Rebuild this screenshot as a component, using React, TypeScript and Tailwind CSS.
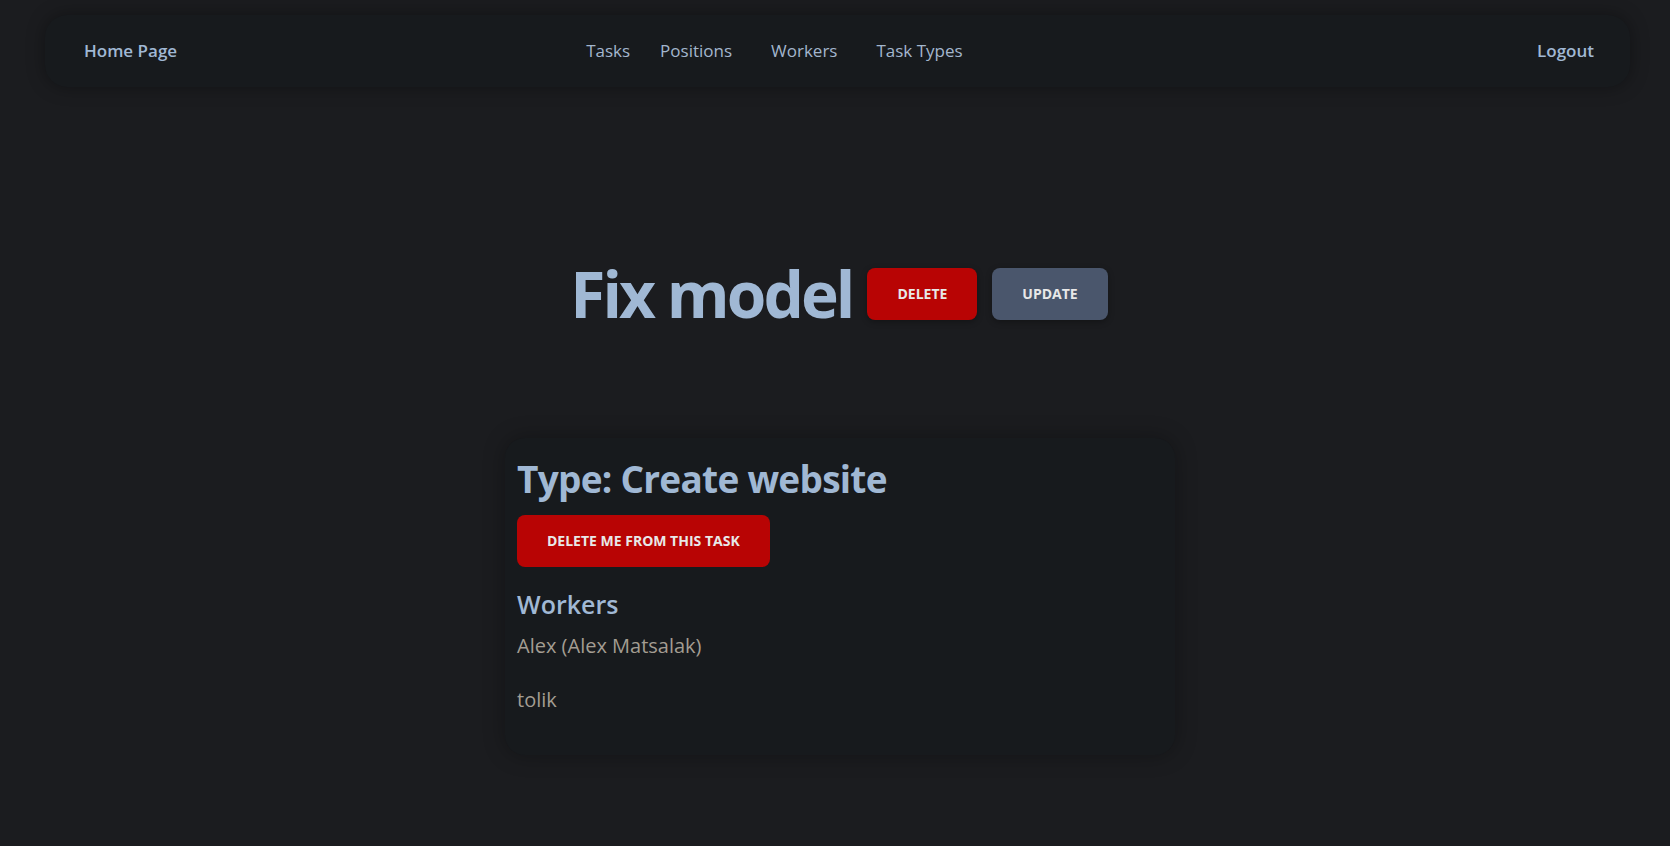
import React from 'react';

const NAV_LINKS = [
  { label: 'Tasks', cls: 'ml-0' },
  { label: 'Positions', cls: 'ml-[30px]' },
  { label: 'Workers', cls: 'ml-[39px]' },
  { label: 'Task Types', cls: 'ml-[39px]' },
];

const WORKERS = ['Alex (Alex Matsalak)', 'tolik'];

function Navbar() {
  return (
    <nav className="ml-[45px] mr-[40px] h-[72px] rounded-[22px] bg-[#171a1d] shadow-[0_0_18px_rgba(0,0,0,0.35)] flex items-center pl-[39px] pr-[36px]">
      <a className="text-[17px] font-semibold text-[#a0b8d4]">Home Page</a>
      <ul className="flex items-center ml-[409px]">
        {NAV_LINKS.map((link) => (
          <li key={link.label} className={`${link.cls} text-[17px] text-[#a3b6cd]`}>
            {link.label}
          </li>
        ))}
      </ul>
      <a className="ml-auto text-[17px] font-semibold text-[#a0b8d4]">Logout</a>
    </nav>
  );
}

export default function App() {
  return (
    <div className="min-h-screen bg-[#1b1c1f] font-['Open_Sans',sans-serif] pt-[15px] pb-[50px]">
      <Navbar />

      {/* Task header */}
      <div className="mt-[159px] flex items-center justify-center pl-[8px]">
        <h1 className="text-[64px] font-bold tracking-[-0.046em] text-[#a0b8d4] leading-normal">Fix model</h1>
        <button className="ml-[15px] rounded-lg bg-[#b80404] px-[30px] py-4 text-sm font-bold text-[#e8e8e8] shadow-[0_2px_6px_rgba(0,0,0,0.3)]">
          DELETE
        </button>
        <button className="ml-[15px] rounded-lg bg-[#4a566c] px-[30px] py-4 text-sm font-bold text-[#e8e8e8] shadow-[0_2px_6px_rgba(0,0,0,0.3)]">
          UPDATE
        </button>
      </div>

      {/* Task card */}
      <div className="mt-[96px] flex justify-center pl-[10px]">
        <div className="w-[670px] rounded-[20px] bg-[#171a1d] px-3 pt-[13px] pb-[40px] shadow-[0_0_22px_rgba(0,0,0,0.3)]">
          <h2 className="text-[37px] font-bold tracking-[-0.02em] text-[#a0b8d4] leading-normal">Type: Create website</h2>
          <button className="mt-[8px] rounded-lg bg-[#b80404] px-[30px] py-4 text-sm font-bold text-[#e8e8e8]">
            DELETE ME FROM THIS TASK
          </button>
          <h3 className="mt-[19px] text-[25px] font-semibold text-[#a0b8d4] leading-normal">Workers</h3>
          <div className="mt-[8px] flex flex-col gap-[24px]">
            {WORKERS.map((w) => (
              <p key={w} className="text-[20px] text-[#a39d92]">{w}</p>
            ))}
          </div>
        </div>
      </div>
    </div>
  );
}
